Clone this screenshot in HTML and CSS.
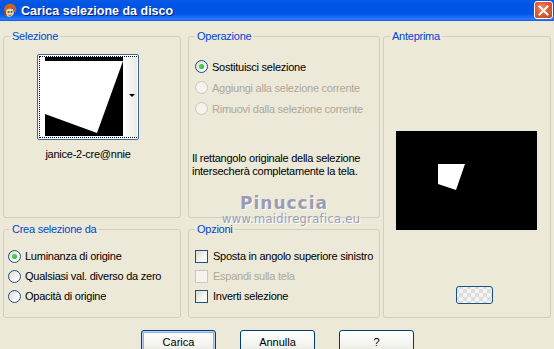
FILE: index.html
```html
<!DOCTYPE html>
<html lang="it">
<head>
  <meta charset="UTF-8">
  <link rel="stylesheet" href="styles.css">
  <title>Carica selezione da disco</title>
</head>
<body>
  <div class="window">
    <div class="titlebar">
      <svg class="app-icon" width="16" height="16" viewBox="0 0 16 16">
        <path d="M2 7 C2 2 6 0 10 1 C14 2 15 6 14 10 L12 8 L11 5 L6 6 L4 9 Z" fill="#c8641e"/>
        <path d="M4 8 C5 5 9 5 11 6 L12 10 C11 14 6 15 4 12 Z" fill="#f6d2a8"/>
        <circle cx="6.5" cy="9" r="1" fill="#2b6b2b"/>
        <circle cx="9.5" cy="9" r="1" fill="#2b6b2b"/>
        <path d="M6.5 12 Q8 13 9.5 12" stroke="#b03020" stroke-width="0.8" fill="none"/>
        <path d="M1 6 L3 14 L5 12" fill="#a04a14"/>
      </svg>
      <span class="title">Carica selezione da disco</span>
      <div class="close-btn">
        <svg width="11" height="11" viewBox="0 0 11 11">
          <path d="M1.5 1.5 L9.5 9.5 M9.5 1.5 L1.5 9.5" stroke="#fff" stroke-width="2" stroke-linecap="square"/>
        </svg>
      </div>
    </div>

    <div class="content">
      <div class="groups">
        <fieldset class="group g-sel">
          <legend>Selezione</legend>
          <div class="thumb">
            <svg class="thumb-img" width="78" height="79" viewBox="0 0 78 79">
              <rect width="78" height="79" fill="#000"/>
              <polygon points="0,4 78,4 52,76 0,57" fill="#fff"/>
            </svg>
            <div class="thumb-side"><span class="arrow"></span></div>
          </div>
          <div class="thumb-name">janice-2-cre@nnie</div>
        </fieldset>

        <fieldset class="group g-op">
          <legend>Operazione</legend>
          <div class="opt"><span class="radio on"></span>Sostituisci selezione</div>
          <div class="opt disabled"><span class="radio"></span>Aggiungi alla selezione corrente</div>
          <div class="opt disabled"><span class="radio"></span>Rimuovi dalla selezione corrente</div>
          <p class="note">Il rettangolo originale della selezione intersecherà completamente la tela.</p>
        </fieldset>

        <fieldset class="group g-prev">
          <legend>Anteprima</legend>
          <svg class="preview" width="141" height="99" viewBox="0 0 141 99">
            <rect width="141" height="99" fill="#000"/>
            <polygon points="42,33 69,33 60,59 42,53" fill="#fff"/>
          </svg>
          <div class="bg-btn"></div>
        </fieldset>

        <fieldset class="group g-crea">
          <legend>Crea selezione da</legend>
          <div class="opt"><span class="radio on"></span>Luminanza di origine</div>
          <div class="opt"><span class="radio"></span>Qualsiasi val. diverso da zero</div>
          <div class="opt"><span class="radio"></span>Opacità di origine</div>
        </fieldset>

        <fieldset class="group g-opz">
          <legend>Opzioni</legend>
          <div class="opt"><span class="check"></span>Sposta in angolo superiore sinistro</div>
          <div class="opt disabled"><span class="check"></span>Espandi sulla tela</div>
          <div class="opt"><span class="check"></span>Inverti selezione</div>
        </fieldset>
      </div>

      <div class="buttons">
        <button class="btn default">Carica</button>
        <button class="btn">Annulla</button>
        <button class="btn">?</button>
      </div>

      <div class="watermark">
        <div class="wm-name">Pinuccia</div>
        <div class="wm-url">www.maidiregrafica.eu</div>
      </div>
    </div>
  </div>
</body>
</html>
```

FILE: styles.css
```css
html, body {
  margin: 0;
  padding: 0;
}

body {
  width: 554px;
  height: 349px;
  overflow: hidden;
  background: #ece9d8;
  font-family: "Liberation Sans", Arial, sans-serif;
  font-size: 11px;
  letter-spacing: -0.25px;
  color: #000;
}

.window {
  position: relative;
  height: 349px;
}

/* title bar */
.titlebar {
  height: 21px;
  display: flex;
  align-items: center;
  background: linear-gradient(#0a5ae6 0%, #0054e3 20%, #0055e8 65%, #1c6ffc 85%, #2a7bff 92%, #0e58d6 100%);
  position: relative;
  letter-spacing: 0;
}

.app-icon {
  margin: 0 3px 0 2px;
}

.title {
  color: #fff;
  font-weight: bold;
  font-size: 12.5px;
  text-shadow: 1px 1px 0 #0a1e6e;
}

.close-btn {
  position: absolute;
  right: 1px;
  top: 1px;
  width: 19px;
  height: 18px;
  box-sizing: border-box;
  border: 1px solid #fff;
  border-radius: 3px;
  background: radial-gradient(circle at 40% 35%, #f08a68 0%, #e05a32 45%, #c8421c 100%);
  display: flex;
  align-items: center;
  justify-content: center;
}

/* group boxes */
.content {
  padding: 9px 0 0 3px;
}

.groups {
  display: grid;
  grid-template-columns: 178px 7px 192px 3px 168px;
  grid-template-rows: 188px 95px;
  row-gap: 5px;
}

.group {
  margin: 0;
  padding: 0;
  min-width: 0;
  border: 1px solid #d0d0bf;
  border-radius: 3px;
  box-sizing: border-box;
}

.group legend {
  color: #0046d5;
  margin-left: 6px;
  padding: 0 2px;
  line-height: 13px;
}

.g-sel { grid-column: 1; grid-row: 1; }
.g-op { grid-column: 3; grid-row: 1; }
.g-prev { grid-column: 5; grid-row: 1 / span 2; }
.g-crea { grid-column: 1; grid-row: 2; padding-top: 10px; }
.g-opz { grid-column: 3; grid-row: 2; padding-top: 10px; }

/* selection thumbnail */
.thumb {
  margin: 11px 0 0 33px;
  width: 102px;
  height: 86px;
  box-sizing: border-box;
  border: 1px solid #3c6496;
  border-radius: 2px;
  background: #fff;
  display: flex;
  padding: 2px 1px 2px 7px;
  outline: 1px dotted #000;
  outline-offset: -3px;
}

.thumb-img {
  display: block;
}

.thumb-side {
  flex: 1;
  background: linear-gradient(90deg, #ffffff, #e8e8e4);
  position: relative;
}

.arrow {
  position: absolute;
  right: 2px;
  top: 37px;
  border-left: 3px solid transparent;
  border-right: 3px solid transparent;
  border-top: 3px solid #000;
}

.thumb-name {
  margin: 8px 0 0 33px;
  width: 102px;
  text-align: center;
}

/* options */
.opt {
  display: flex;
  align-items: center;
  height: 20px;
  padding-left: 6px;
  white-space: nowrap;
}

.g-op .opt {
  height: 21px;
}

.g-op .opt:first-of-type {
  margin-top: 13px;
}

.g-crea .opt {
  padding-left: 4px;
}

.opt.disabled {
  color: #aca899;
}

.radio {
  width: 13px;
  height: 13px;
  box-sizing: border-box;
  border: 1px solid #1c5180;
  border-radius: 50%;
  background: linear-gradient(135deg, #dcd9cf, #fbfbf9 70%, #ffffff);
  margin-right: 4px;
  display: flex;
  align-items: center;
  justify-content: center;
  flex: none;
}

.radio.on::after {
  content: "";
  width: 5px;
  height: 5px;
  border-radius: 50%;
  background: radial-gradient(circle at 40% 40%, #5fd85f, #21a121);
}

.disabled .radio,
.disabled .check {
  border-color: #cac8bb;
  background: #f4f3ee;
}

.check {
  width: 13px;
  height: 13px;
  box-sizing: border-box;
  border: 1px solid #1c5180;
  background: linear-gradient(135deg, #dcd9cf, #f6f5f0 60%, #ffffff);
  margin-right: 5px;
  flex: none;
}

.note {
  margin: 33px 0 0 3px;
  line-height: 13px;
  width: 180px;
}

/* preview */
.g-prev {
  display: flex;
  flex-direction: column;
}

.preview {
  display: block;
  margin: 88px 0 0 12px;
}

.bg-btn {
  margin: 56px 0 0 72px;
  width: 37px;
  height: 18px;
  box-sizing: border-box;
  border: 1px solid #1c4f7e;
  border-radius: 3px;
  background-color: #f4f4f2;
  background-image:
    linear-gradient(45deg, #dcdcdc 25%, transparent 25%, transparent 75%, #dcdcdc 75%),
    linear-gradient(45deg, #dcdcdc 25%, transparent 25%, transparent 75%, #dcdcdc 75%);
  background-size: 8px 8px;
  background-position: 2px 2px, 6px 6px;
}

/* buttons */
.buttons {
  display: flex;
  gap: 24px;
  margin: 12px 0 0 138px;
}

.btn {
  width: 75px;
  height: 23px;
  padding: 0;
  font-family: "Liberation Sans", Arial, sans-serif;
  font-size: 11px;
  color: #000;
  border: 1px solid #003c74;
  border-radius: 3px;
  background: linear-gradient(#ffffff, #f0f0ea 80%, #d6d0c5);
}

.btn.default {
  box-shadow: inset 0 0 0 1px #b9d1fa, inset 0 0 0 2px #8eb0ec;
}

/* overlay watermark */
.watermark {
  position: absolute;
  left: 222px;
  top: 193px;
  width: 124px;
  text-align: center;
  color: #9a9cb6;
  font-family: "DejaVu Sans", sans-serif;
  text-shadow: 1px 1px 0 #ffffff;
  letter-spacing: 0;
}

.wm-name {
  font-size: 17px;
  font-weight: bold;
  letter-spacing: 1px;
  line-height: 20px;
}

.wm-url {
  font-size: 11.5px;
  line-height: 12px;
  letter-spacing: 0.3px;
}
```
